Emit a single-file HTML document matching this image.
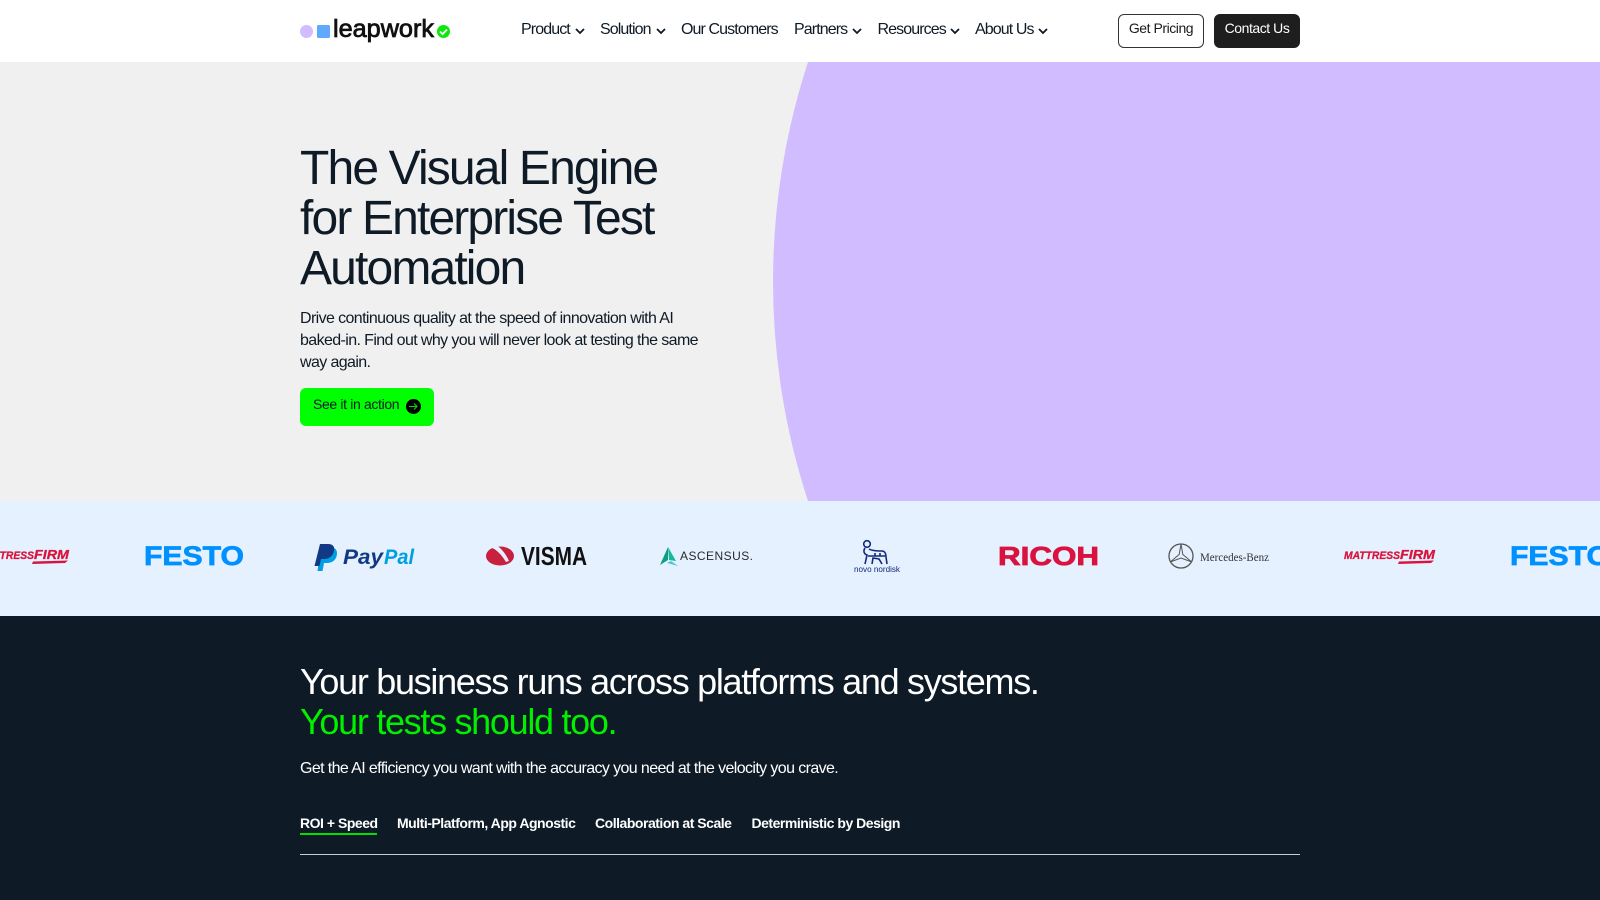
<!DOCTYPE html>
<html lang="en"><head><meta charset="utf-8"><title>Leapwork</title>
<style>
*{box-sizing:border-box;margin:0;padding:0}
html,body{width:1600px;height:900px;overflow:hidden;background:#0e1a26}
body{position:relative;font-family:"Liberation Sans",Arial,sans-serif}
.a{position:absolute;white-space:nowrap}
header{position:absolute;left:0;top:0;width:1600px;height:62px;background:#fff}
.nav{font-size:16px;line-height:20px;top:20px;color:#0e1a26;letter-spacing:-.9px}
.btn{top:14px;height:34px;width:86px;border-radius:6px;font-size:14px;line-height:27px;text-align:center;letter-spacing:-.45px}
h1{position:absolute;left:300px;top:143.5px;width:420px;font-weight:400;font-size:48px;line-height:50px;letter-spacing:-1.85px;color:#0e1a26;white-space:nowrap}
.lead{left:300px;top:308.4px;font-size:16px;line-height:21.6px;color:#0e1a26;letter-spacing:-.61px}
h2{position:absolute;left:300px;top:662.4px;font-weight:400;font-size:36px;line-height:40px;letter-spacing:-1.3px;color:#fff;white-space:nowrap}
h2 span{color:#00f000}
.tab{top:814px;font-size:14px;line-height:18px;font-weight:700;color:#fff;letter-spacing:-.48px}
</style></head>
<body>
<section class="a" style="left:0;top:62px;width:1600px;height:439px;background:#f0f0f0;overflow:hidden">
<svg width="1600" height="439" style="position:absolute;left:0;top:0"><path d="M808 0A706 706 0 0 0 808 439H1600V0Z" fill="#d1bcff"/></svg>
</section>

<header>
<svg class="a" style="left:296px;top:14px" width="160" height="32" viewBox="296 14 160 32">
<circle cx="306.500" cy="31.500" r="6.500" fill="#d1bcff"/>
<rect x="317" y="25" width="13" height="13" rx="1.500" fill="#5fa9ff"/>
<text x="333" y="37" font-family="Liberation Sans" font-size="25" fill="#111" stroke="#111" stroke-width=".8" textLength="101" lengthAdjust="spacingAndGlyphs">leapwork</text>
<circle cx="443.500" cy="31.500" r="6.500" fill="#0ce80c"/>
<path d="M440 31.500l2.600 2.600 4.400-4.600" fill="none" stroke="#fff" stroke-width="1.800"/>
</svg>
<span class="a nav" style="left:521px">Product</span>
<span class="a nav" style="left:600px">Solution</span>
<span class="a nav" style="left:681px">Our Customers</span>
<span class="a nav" style="left:794px">Partners</span>
<span class="a nav" style="left:877.500px">Resources</span>
<span class="a nav" style="left:975px">About Us</span>
<svg class="a" style="left:0;top:0" width="1100" height="62" fill="none" stroke="#0e1a26" stroke-width="1.800">
<path d="M576 29l4 4 4-4"/><path d="M657 29l4 4 4-4"/><path d="M853 29l4 4 4-4"/><path d="M951 29l4 4 4-4"/><path d="M1039 29l4 4 4-4"/>
</svg>
<div class="a btn" style="left:1118px;border:1px solid #333;color:#1a1a1a;background:#fff">Get Pricing</div>
<div class="a btn" style="left:1214px;border:1px solid #1e1e1e;background:#1e1e1e;color:#fff">Contact Us</div>
</header>

<h1>The Visual Engine<br>for Enterprise Test<br>Automation</h1>
<p class="a lead">Drive continuous quality at the speed of innovation with AI<br>baked-in. Find out why you will never look at testing the same<br>way again.</p>
<div class="a" style="left:300px;top:388px;width:134px;height:38px;background:#00ff00;border-radius:6px"></div>
<span class="a" style="left:313px;top:395px;font-size:14px;line-height:18px;letter-spacing:-.35px;color:#0e1a26">See it in action</span>
<svg class="a" style="left:405px;top:398px" width="17" height="17"><circle cx="8.500" cy="8.500" r="7.500" fill="#000"/><path d="M4 8.500h8M9 5.500l3 3-3 3" fill="none" stroke="#0d0" stroke-width="1.100"/></svg>

<section class="a" style="left:0;top:501px;width:1600px;height:115px;background:#e5f1ff">
<svg width="1600" height="115" viewBox="0 501 1600 115" style="position:absolute;left:0;top:0">
<!-- Mattress Firm left -->
<g font-family="Liberation Sans" font-weight="700" font-style="italic" fill="#d9143c" stroke="#d9143c" stroke-width=".3">
<text x="-22" y="559" font-size="11" textLength="56" lengthAdjust="spacingAndGlyphs">MATTRESS</text>
<text x="34" y="559" font-size="13" textLength="35" lengthAdjust="spacingAndGlyphs">FIRM</text>
</g>
<path d="M33 561.500l35-1-3 2.500-33 1z" fill="#d9143c"/>
<!-- Festo -->
<text x="144" y="565" font-family="Liberation Sans" font-size="26.500" font-weight="700" fill="#0091ff" stroke="#0091ff" stroke-width=".7" textLength="100" lengthAdjust="spacingAndGlyphs">FESTO</text>
<!-- PayPal -->
<path d="M319 545h8c5 0 8 2 8 6 0 7-5 10-10 10h-3l-1.500 8h-5z" fill="#009ee3" transform="translate(2,2)"/>
<path d="M320 544h8c5 0 7 3 6 7-1 5-5 8-10 8h-3l-1.500 7h-5z" fill="#113984"/>
<text x="343" y="564" font-family="Liberation Sans" font-size="21" font-weight="700" font-style="italic" fill="#113984" textLength="40" lengthAdjust="spacingAndGlyphs">Pay</text>
<text x="384" y="564" font-family="Liberation Sans" font-size="21" font-weight="700" font-style="italic" fill="#009ee3" textLength="30" lengthAdjust="spacingAndGlyphs">Pal</text>
<!-- Visma -->
<ellipse cx="500" cy="556" rx="14" ry="9.500" fill="#c8203f"/>
<path d="M489 547c5 1 11 5 17 15l3-1c-3-7-8-13-13-16z" fill="#e5f1ff"/>
<text x="521" y="565" font-family="Liberation Sans" font-size="26" font-weight="700" fill="#111" textLength="66" lengthAdjust="spacingAndGlyphs">VISMA</text>
<!-- Ascensus -->
<path d="M668 547l-8 18 8-5z" fill="#0f9c82"/><path d="M668 547l1 13 7 1z" fill="#1bb79a"/><path d="M667 563l4-2 7 5z" fill="#49c9d6"/>
<text x="680" y="560" font-family="Liberation Sans" font-size="12" fill="#2a2a2a" textLength="73" lengthAdjust="spacing">ASCENSUS.</text>
<!-- Novo Nordisk -->
<g fill="none" stroke="#14287a" stroke-width="1.600">
<circle cx="867" cy="544" r="3.300"/>
<path d="M865 548c-2 3-1 6 2 7l-2 9M869 549c3 2 9 2 13 2 3 0 4 3 4 6l1 7M872 564l1-6 6 1 3 5M868 556h17M875 553v3M880 553v3"/>
</g>
<text x="854" y="572" font-family="Liberation Sans" font-size="8.500" fill="#14287a" textLength="46" lengthAdjust="spacingAndGlyphs">novo nordisk</text>
<!-- Ricoh -->
<text x="998" y="565" font-family="Liberation Sans" font-size="26" font-weight="700" fill="#d9123f" stroke="#d9123f" stroke-width=".8" textLength="101" lengthAdjust="spacingAndGlyphs">RICOH</text>
<!-- Mercedes -->
<circle cx="1181" cy="556" r="12" fill="none" stroke="#555" stroke-width="1.300"/>
<path d="M1181 544l1.800 10.500 9 7.500-10.800-4-10.800 4 9-7.500z" fill="none" stroke="#555" stroke-width="1"/>
<text x="1200" y="561" font-family="Liberation Serif" font-size="12" fill="#333" textLength="69" lengthAdjust="spacingAndGlyphs">Mercedes-Benz</text>
<!-- Mattress Firm -->
<g font-family="Liberation Sans" font-weight="700" font-style="italic" fill="#d9143c" stroke="#d9143c" stroke-width=".3">
<text x="1344" y="559" font-size="11" textLength="56" lengthAdjust="spacingAndGlyphs">MATTRESS</text>
<text x="1400" y="559" font-size="13" textLength="35" lengthAdjust="spacingAndGlyphs">FIRM</text>
</g>
<path d="M1399 561.500l35-1-3 2.500-33 1z" fill="#d9143c"/>
<!-- Festo right -->
<text x="1510" y="565" font-family="Liberation Sans" font-size="26.500" font-weight="700" fill="#0091ff" stroke="#0091ff" stroke-width=".7" textLength="100" lengthAdjust="spacingAndGlyphs">FESTO</text>
</svg>
</section>

<h2>Your business runs across platforms and systems.<br><span>Your tests should too.</span></h2>
<p class="a" style="left:300px;top:759.400px;font-size:16px;line-height:20px;color:#fff;letter-spacing:-.61px">Get the AI efficiency you want with the accuracy you need at the velocity you crave.</p>
<span class="a tab" style="left:300px">ROI + Speed</span>
<span class="a tab" style="left:397px">Multi-Platform, App Agnostic</span>
<span class="a tab" style="left:595px">Collaboration at Scale</span>
<span class="a tab" style="left:751.500px">Deterministic by Design</span>
<div class="a" style="left:300px;top:833px;width:77px;height:2px;background:#00e000"></div>
<div class="a" style="left:300px;top:854px;width:1000px;height:1px;background:#c9ccd0"></div>
</body></html>
